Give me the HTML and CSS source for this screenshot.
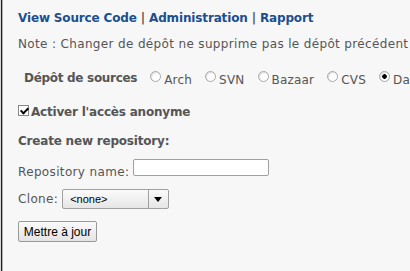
FILE: index.html
```html
<!DOCTYPE html>
<html lang="fr">
<head>
  <meta charset="UTF-8">
  <title>Dépôt de sources</title>
  <link rel="stylesheet" href="styles.css">
</head>
<body>
  <div class="panel">
    <div class="nav">
      <a href="#">View Source Code</a> | <a href="#">Administration</a> | <a href="#">Rapport</a>
    </div>
    <p class="note">Note : Changer de dépôt ne supprime pas le dépôt précédent</p>
    <div class="scm">
      <span class="scm-title">Dépôt de sources</span>
      <label class="opt"><input type="radio" name="scm"><span>Arch</span></label>
      <label class="opt"><input type="radio" name="scm"><span>SVN</span></label>
      <label class="opt"><input type="radio" name="scm"><span>Bazaar</span></label>
      <label class="opt"><input type="radio" name="scm"><span>CVS</span></label>
      <label class="opt"><input type="radio" name="scm" checked><span>Darcs</span></label>
    </div>
    <label class="anon"><input type="checkbox" checked><span>Activer l'accès anonyme</span></label>
    <div class="create">Create new repository:</div>
    <div class="row">
      <label for="repo-name">Repository name:</label>
      <input type="text" id="repo-name" class="text-field">
    </div>
    <div class="row clone-row">
      <label for="clone">Clone:</label>
      <span class="select-wrap">
        <select id="clone" class="clone">
          <option>&lt;none&gt;</option>
        </select>
      </span>
    </div>
    <button type="submit" class="update">Mettre à jour</button>
  </div>
</body>
</html>
```

FILE: styles.css
```css
html, body {
  margin: 0;
  height: 100%;
}
body {
  font-family: "DejaVu Sans", sans-serif;
  font-size: 12px;
  line-height: 15px;
  color: #555;
  background-color: #f7f7f7;
}
.panel {
  border-left: 1px solid #222;
  box-shadow: -1px 0 0 #d4d4d4, inset 1px 0 0 #b0b0b0;
  margin-left: 1px;
  height: 100%;
  padding: 11px 0 0 16px;
  box-sizing: border-box;
  white-space: nowrap;
  overflow: hidden;
}
.nav {
  font-weight: bold;
  letter-spacing: -0.15px;
}
.nav a {
  color: #1b4f8f;
  text-decoration: none;
}
.note {
  margin: 11px 0 0;
  letter-spacing: 0.35px;
}
.scm {
  display: flex;
  align-items: flex-start;
  margin: 19px 0 0 6px;
}
.scm-title {
  font-weight: bold;
  letter-spacing: -0.3px;
  margin-right: 13px;
}
.opt {
  display: flex;
  align-items: flex-start;
  margin-right: 13px;
  letter-spacing: 0.2px;
}
.opt span {
  margin-top: 2px;
}
.opt input {
  appearance: none;
  width: 11px;
  height: 11px;
  margin: 0 3px 0 0;
  border: 1px solid #a8a8a8;
  border-radius: 50%;
  background: #fff;
  box-sizing: border-box;
  box-shadow: inset 1px 1px 1px #ddd;
}
.opt input:checked {
  background: radial-gradient(circle, #000 0, #000 2px, #fff 2.6px);
}
.anon {
  display: flex;
  align-items: flex-start;
  margin-top: 17px;
  font-weight: bold;
  letter-spacing: -0.2px;
}
.anon input {
  appearance: none;
  position: relative;
  width: 11px;
  height: 11px;
  margin: 0 2px 0 0;
  border: 1px solid #888;
  background: #fff;
  box-sizing: border-box;
}
.anon input:checked::after {
  content: "";
  position: absolute;
  left: 3px;
  top: 0;
  width: 3px;
  height: 6px;
  border-right: 2px solid #000;
  border-bottom: 2px solid #000;
  transform: rotate(45deg);
}
.create {
  font-weight: bold;
  letter-spacing: -0.2px;
  margin-top: 14px;
}
.row {
  display: flex;
  align-items: flex-start;
  margin-top: 10px;
  letter-spacing: 0.35px;
}
.row label {
  margin: 6px 4px 0 0;
}
.text-field {
  width: 136px;
  height: 17px;
  margin: 0;
  padding: 0 2px;
  border: 1px solid #a0a0a0;
  border-radius: 2px;
  background: #fff;
  box-sizing: border-box;
  font-size: 11px;
}
.clone-row {
  margin-top: 9px;
}
.clone-row label {
  margin-top: 3px;
}
.select-wrap {
  position: relative;
  display: inline-block;
}
.select-wrap::after {
  content: "";
  position: absolute;
  right: 7px;
  top: 8px;
  border-left: 4px solid transparent;
  border-right: 4px solid transparent;
  border-top: 5px solid #000;
  pointer-events: none;
}
.clone {
  appearance: none;
  width: 107px;
  height: 20px;
  margin: 0;
  padding: 0 0 0 7px;
  border: 1px solid #a0a0a0;
  border-radius: 2px;
  background: linear-gradient(to right, transparent 85px, #a0a0a0 85px, #a0a0a0 86px, transparent 86px),
    linear-gradient(#fbfbfb, #e6e6e6);
  box-sizing: border-box;
  font-family: "Liberation Sans", sans-serif;
  font-size: 11px;
  color: #000;
}
.update {
  display: block;
  margin-top: 12px;
  width: 79px;
  height: 21px;
  padding: 0;
  border: 1px solid #999;
  border-radius: 2px;
  background: linear-gradient(#fafafa, #e4e4e4);
  font-family: "Liberation Sans", sans-serif;
  font-size: 12px;
  color: #000;
}
```
